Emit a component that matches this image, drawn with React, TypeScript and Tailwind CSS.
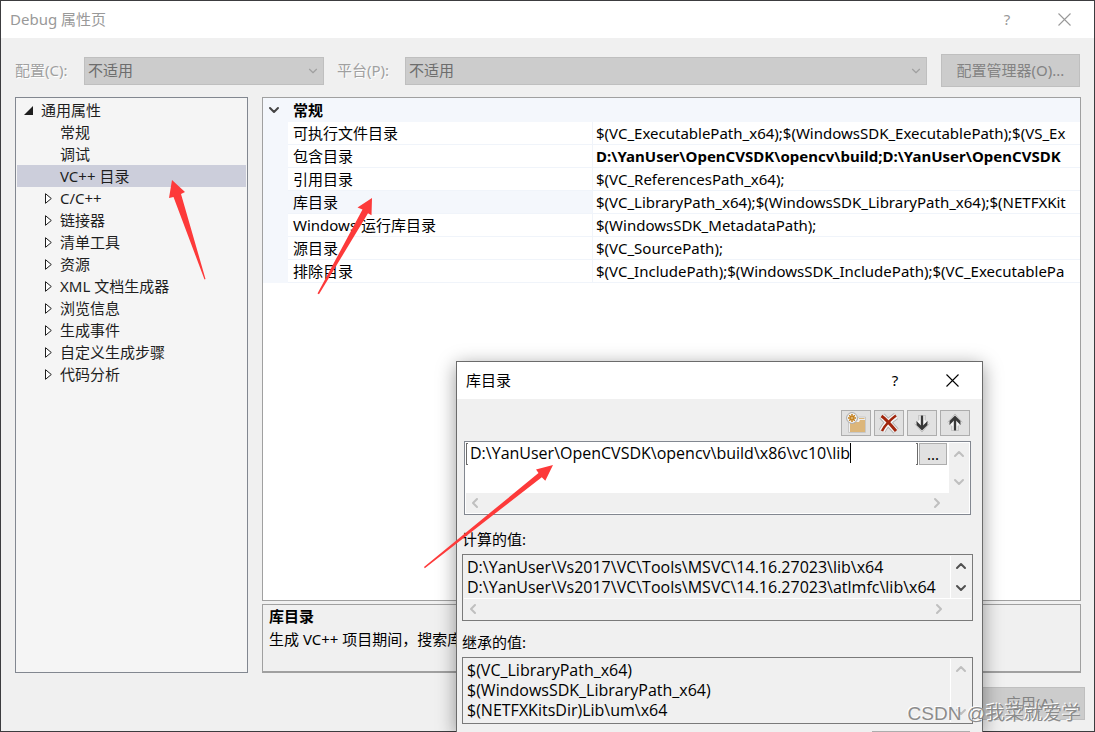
import { ChevronDown, ChevronLeft, ChevronRight, ChevronUp } from "lucide-react";

const treeItems = [
  { label: "常规" },
  { label: "调试" },
  { label: "VC++ 目录", selected: true },
  { label: "C/C++", expandable: true },
  { label: "链接器", expandable: true },
  { label: "清单工具", expandable: true },
  { label: "资源", expandable: true },
  { label: "XML 文档生成器", expandable: true },
  { label: "浏览信息", expandable: true },
  { label: "生成事件", expandable: true },
  { label: "自定义生成步骤", expandable: true },
  { label: "代码分析", expandable: true },
];

const properties = [
  {
    name: "可执行文件目录",
    value: "$(VC_ExecutablePath_x64);$(WindowsSDK_ExecutablePath);$(VS_Ex",
  },
  {
    name: "包含目录",
    value: "D:\\YanUser\\OpenCVSDK\\opencv\\build;D:\\YanUser\\OpenCVSDK",
    bold: true,
  },
  { name: "引用目录", value: "$(VC_ReferencesPath_x64);" },
  {
    name: "库目录",
    value: "$(VC_LibraryPath_x64);$(WindowsSDK_LibraryPath_x64);$(NETFXKit",
    selected: true,
  },
  { name: "Windows 运行库目录", value: "$(WindowsSDK_MetadataPath);" },
  { name: "源目录", value: "$(VC_SourcePath);" },
  {
    name: "排除目录",
    value: "$(VC_IncludePath);$(WindowsSDK_IncludePath);$(VC_ExecutablePa",
  },
];

function CloseIcon() {
  return (
    <svg width="13" height="13" viewBox="0 0 13 13" stroke="currentColor" fill="none">
      <path d="M.5.5l12 12M12.5.5l-12 12" strokeWidth="1.1" />
    </svg>
  );
}

function TitleBar({ title, className }: { title: string; className: string }) {
  return (
    <header className={`flex h-[37px] shrink-0 items-center bg-white pr-px pl-[9px] ${className}`}>
      <h1 className="flex-1">{title}</h1>
      <button type="button" aria-label="帮助" className="flex w-14 justify-center">
        ?
      </button>
      <button type="button" aria-label="关闭" className="flex w-[58px] justify-center">
        <CloseIcon />
      </button>
    </header>
  );
}

function ComboBox({ id, className }: { id: string; className: string }) {
  return (
    <div className={`relative ${className}`}>
      <select
        id={id}
        disabled
        className="h-7 w-full appearance-none border border-[#bfbfbf] bg-[#cccccc] px-[3px] text-[#6d6d6d] opacity-100"
      >
        <option>不适用</option>
      </select>
      <ChevronDown
        size={14}
        strokeWidth={2}
        className="pointer-events-none absolute top-[7px] right-1 text-[#a0a0a0]"
      />
    </div>
  );
}

function Tree() {
  return (
    <nav className="w-[233px] shrink-0 border border-[#828790] bg-[#f5f5f5] p-px text-[#1e1e1e]">
      <div className="flex h-[22px] items-center gap-2 pl-[7px]">
        <svg width="9" height="9" viewBox="0 0 9 9">
          <path d="M9 0v9H0z" fill="#1e1e1e" />
        </svg>
        通用属性
      </div>
      <ul>
        {treeItems.map((item) => (
          <li
            key={item.label}
            className={`flex h-[22px] items-center gap-2 pl-[27px] ${item.selected ? "bg-[#cccedb]" : ""}`}
          >
            <svg width="8" height="11" viewBox="0 0 8 11">
              {item.expandable && (
                <path d="M1.500.7v9.600L7.300 5.500z" fill="#fff" stroke="#1e1e1e" />
              )}
            </svg>
            {item.label}
          </li>
        ))}
      </ul>
    </nav>
  );
}

function PropertyGrid() {
  return (
    <div className="h-[504px] overflow-hidden border border-[#a0a0a0] bg-white">
      <table className="w-full table-fixed border-separate border-spacing-0 text-left whitespace-nowrap">
        <colgroup>
          <col className="w-[25px]" />
          <col className="w-[305px]" />
          <col />
        </colgroup>
        <thead>
          <tr className="h-6 bg-[#f4f7fc]">
            <th className="p-0">
              <ChevronDown size={16} strokeWidth={3} className="ml-[3px] text-[#444]" />
            </th>
            <th colSpan={2} className="p-0 pb-px pl-[5px] leading-[22px] font-bold">
              常规
            </th>
          </tr>
        </thead>
        <tbody>
          {properties.map((row) => (
            <tr key={row.name} className="h-[23px]">
              <td className="bg-[#f4f7fc] p-0" />
              <td
                className={`border-r border-b border-[#f0f4fa] p-0 pl-[5px] leading-[22px] ${row.selected ? "bg-[#f4f7fc]" : ""}`}
              >
                {row.name}
              </td>
              <td
                className={`overflow-hidden border-b border-[#f0f4fa] p-0 pl-[3px] leading-[22px] ${row.bold ? "font-bold" : ""}`}
              >
                {row.value}
              </td>
            </tr>
          ))}
        </tbody>
      </table>
    </div>
  );
}

function NewFolderIcon() {
  return (
    <svg width="22" height="22" viewBox="0 0 22 22">
      <path d="M3.500 20.500V9h8l2-4h7v15.500z" fill="#efefef" stroke="#c8c8c8" />
      <path d="M5 20V10h9l1-2h5v12z" fill="#dcb67a" />
      <path d="M14 6.500h5.500" stroke="#dcb67a" />
      <circle cx="7" cy="6" r="5.400" fill="#f6f6f6" stroke="#a9a9a9" />
      <path d="M7 2v8M3 6h8M4.200 3.200l5.600 5.600M9.800 3.200L4.200 8.800" stroke="#c27d1a" strokeWidth="1.500" />
      <circle cx="7" cy="6" r="1.300" fill="#f6e3bd" stroke="#c27d1a" strokeWidth=".8" />
    </svg>
  );
}

function DeleteIcon() {
  return (
    <svg width="22" height="22" viewBox="0 0 22 22" fill="none" strokeLinejoin="round">
      <path d="M4 4l14 15M18 4C12 8 7 13 4 19" stroke="#b0b0b0" strokeWidth="7" />
      <path d="M4 4l14 15M18 4C12 8 7 13 4 19" stroke="#f6f6f6" strokeWidth="5.400" />
      <path d="M3.500 4C8 7 13 13 18 19" stroke="#a1260d" strokeWidth="3" />
      <path d="M18 3.500C12 8 7 13 4 19" stroke="#a1260d" strokeWidth="2.500" />
    </svg>
  );
}

function ArrowIcon({ up }: { up?: boolean }) {
  return (
    <svg width="22" height="22" viewBox="0 0 22 22" fill="none" className={up ? "rotate-180" : ""}>
      <path d="M11 3v13M6 9.500l5 5.500 5-5.500" stroke="#adadad" strokeWidth="7" />
      <path d="M11 3.500v13M6 9.800l5 5.500 5-5.500" stroke="#f6f6f6" strokeWidth="5.400" />
      <path d="M11 3.500v13" stroke="#383838" strokeWidth="2.400" />
      <path d="M5.500 9v4l5.500 5.500 5.500-5.500V9L11 14.500z" fill="#383838" />
    </svg>
  );
}

const toolButtons = [
  { label: "新行", icon: <NewFolderIcon /> },
  { label: "删除", icon: <DeleteIcon /> },
  { label: "下移", icon: <ArrowIcon /> },
  { label: "上移", icon: <ArrowIcon up /> },
];

function ScrollColumn({ active, className }: { active?: boolean; className: string }) {
  return (
    <div
      className={`flex w-5 shrink-0 flex-col items-center justify-between bg-[#f0f0f0] pr-px ${active ? "text-[#505050]" : "text-[#bfbfbf]"} ${className}`}
    >
      <ChevronUp size={16} strokeWidth={3} />
      <ChevronDown size={16} strokeWidth={3} />
    </div>
  );
}

function ScrollRow() {
  return (
    <div className="flex h-5 items-center justify-between bg-[#f0f0f0] pr-6 pl-px text-[#bfbfbf]">
      <ChevronLeft size={16} strokeWidth={3} />
      <ChevronRight size={16} strokeWidth={3} />
    </div>
  );
}

function DirectoryDialog() {
  return (
    <section
      role="dialog"
      aria-label="库目录"
      className="absolute top-[361px] bottom-0 left-[456px] flex w-[527px] flex-col overflow-hidden border border-b-0 border-[#6b6b6b] bg-[#f0f0f0] shadow-[0_4px_18px_rgba(0,0,0,0.4)]"
    >
      <TitleBar title="库目录" className="text-black" />
      <div className="flex shrink-0 justify-end gap-[3px] pt-[11px] pr-3">
        {toolButtons.map((tool) => (
          <button
            key={tool.label}
            type="button"
            aria-label={tool.label}
            className="flex h-[26px] w-[30px] items-center justify-center border border-[#adadad] bg-[#e1e1e1]"
          >
            {tool.icon}
          </button>
        ))}
      </div>

      <div className="mx-[7px] mt-[5px] mr-[11px] h-[74px] shrink-0 border border-[#828790] bg-white p-px">
        <div className="flex h-[50px]">
          <div className="flex h-[22px] flex-1">
            <span className="w-[2px] border border-r-0 border-[#6b6b6b]" />
            <div className="flex flex-1 items-start pl-[2px]">
              <input
                aria-label="路径"
                readOnly
                value="D:\YanUser\OpenCVSDK\opencv\build\x86\vc10\lib"
                className="field-sizing-content h-5 font-['Open_Sans',sans-serif] text-base leading-5 outline-none"
              />
              <span className="h-5 w-px bg-black" />
            </div>
            <span className="w-[2px] border border-l-0 border-[#6b6b6b]" />
            <button
              type="button"
              className="ml-px h-[22px] w-7 border border-[#adadad] bg-[#e1e1e1] leading-5"
            >
              ...
            </button>
          </div>
          <ScrollColumn className="ml-[2px] py-[3px]" />
        </div>
        <ScrollRow />
      </div>

      <label htmlFor="computed" className="mt-[13px] ml-[5px] h-[22px] shrink-0 leading-[22px]">
        计算的值:
      </label>
      <div className="mx-[5px] mt-1 mr-[9px] h-[67px] shrink-0 border border-[#7a7a7a] p-px">
        <div className="flex h-[43px] border-b border-white">
          <textarea
            id="computed"
            readOnly
            value={
              "D:\\YanUser\\Vs2017\\VC\\Tools\\MSVC\\14.16.27023\\lib\\x64\nD:\\YanUser\\Vs2017\\VC\\Tools\\MSVC\\14.16.27023\\atlmfc\\lib\\x64"
            }
            className="block flex-1 resize-none overflow-hidden border-r border-white pt-px pl-[3px] font-['Open_Sans',sans-serif] text-base leading-5 whitespace-pre outline-none"
          />
          <ScrollColumn active className="py-[2px]" />
        </div>
        <ScrollRow />
      </div>

      <label htmlFor="inherited" className="mt-[10px] ml-[5px] h-[22px] shrink-0 leading-[22px]">
        继承的值:
      </label>
      <div className="mx-[5px] mt-1 mr-[9px] flex h-[67px] shrink-0 border border-[#7a7a7a] p-px">
        <textarea
          id="inherited"
          readOnly
          value={"$(VC_LibraryPath_x64)\n$(WindowsSDK_LibraryPath_x64)\n$(NETFXKitsDir)Lib\\um\\x64"}
          className="block flex-1 resize-none overflow-hidden border-r border-white pt-px pl-[3px] font-['Open_Sans',sans-serif] text-base leading-5 whitespace-pre outline-none"
        />
        <ScrollColumn className="py-[2px]" />
      </div>
      <button
        type="button"
        aria-label="宏"
        className="mt-[7px] mr-3 h-7 w-[98px] shrink-0 self-end border border-[#adadad] bg-[#e1e1e1]"
      />
    </section>
  );
}

function Annotations() {
  return (
    <svg className="pointer-events-none absolute inset-0 h-full w-full" fill="#fd3a3a">
      <path d="M172 180l-3 18 4.500-1 31 82.500 1-.5-24.500-85 4-2z" />
      <path d="M372 198l-14.500 9.500 5 2-45 84 1.500.8 49-81 3.500 2z" />
      <path d="M553 465l-17 4.500 2.500 3.500-114.500 94 .8 1.200 117-91 3.500 3.500z" />
    </svg>
  );
}

export default function App() {
  return (
    <div className="relative flex min-h-screen flex-col overflow-hidden font-['Noto_Sans','Noto_Sans_CJK_SC',sans-serif] text-[15px] text-black">
      <main className="flex flex-1 flex-col border border-[#3c3c3f] bg-[#f0f0f0]">
        <TitleBar title="Debug 属性页" className="text-[#999999]" />
        <div className="flex items-center pt-4 pr-[14px] pl-[14px] text-[#a0a0a0]">
          <label htmlFor="config" className="w-[69px] shrink-0 [text-shadow:1px_1px_0_#fff]">
            配置(C):
          </label>
          <ComboBox id="config" className="w-60 shrink-0" />
          <label htmlFor="platform" className="ml-[13px] w-[68px] shrink-0 [text-shadow:1px_1px_0_#fff]">
            平台(P):
          </label>
          <ComboBox id="platform" className="flex-1" />
          <button
            type="button"
            disabled
            className="ml-[14px] h-[33px] w-[139px] shrink-0 border border-[#bfbfbf] bg-[#cccccc] text-[#838383]"
          >
            配置管理器(O)...
          </button>
        </div>

        <div className="mt-[10px] mr-[13px] ml-[14px] flex gap-[14px]">
          <Tree />
          <div className="min-w-0 flex-1">
            <PropertyGrid />
            <div className="mt-[3px] h-[69px] border border-b-2 border-[#a0a0a0] pl-[6px] leading-[23px] whitespace-nowrap">
              <h2 className="font-bold">库目录</h2>
              <p>生成 VC++ 项目期间，搜索库</p>
            </div>
          </div>
        </div>

        <button
          type="button"
          disabled
          className="mt-[14px] mr-[9px] h-[33px] w-[110px] self-end border border-[#bfbfbf] bg-[#cccccc] text-[#838383]"
        >
          应用(A)
        </button>
      </main>

      <DirectoryDialog />
      <Annotations />
      <p className="absolute right-[14px] bottom-1 font-['Liberation_Sans','Noto_Sans_CJK_SC',sans-serif] text-[19px] leading-7 text-[#8c8c8c] [text-shadow:-1px_-1px_0_#fff]">
        CSDN @我菜就爱学
      </p>
    </div>
  );
}
